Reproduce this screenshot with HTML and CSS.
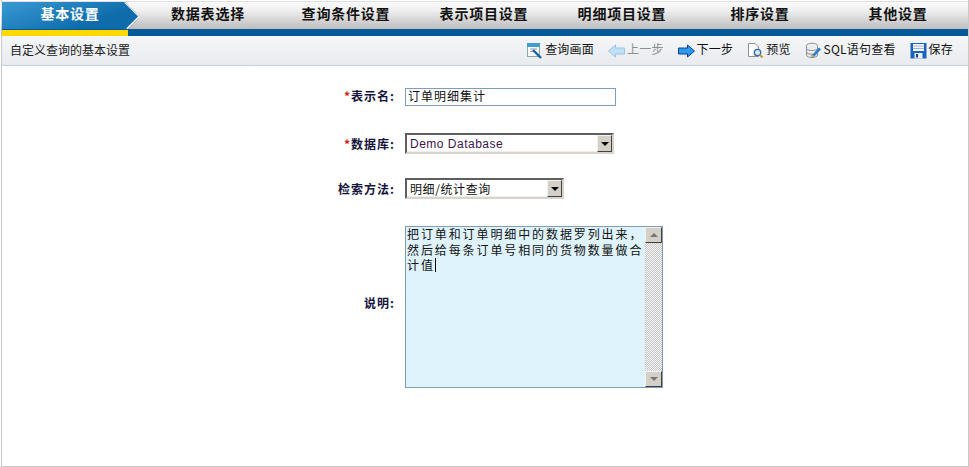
FILE: index.html
```html
<!DOCTYPE html>
<html lang="zh">
<head>
<meta charset="utf-8">
<title>自定义查询</title>
<link rel="stylesheet" href="styles.css">
</head>
<body>
<div class="frame">
  <nav class="tabs">
    <div class="tab active">基本设置
      <svg class="arrow" width="18" height="27" viewBox="0 0 18 27"><path d="M3 0L17.500 14.500L5 27" fill="none" stroke="#f4f4f4" stroke-width="2"/></svg>
    </div>
    <div class="tab">数据表选择</div>
    <div class="tab">查询条件设置</div>
    <div class="tab">表示项目设置</div>
    <div class="tab">明细项目设置</div>
    <div class="tab">排序设置</div>
    <div class="tab">其他设置</div>
  </nav>
  <div class="strip"><div class="strip-on"></div></div>
  <div class="toolbar">
    <span class="hint">自定义查询的基本设置</span>
    <div class="actions">
      <span class="act">
        <svg width="17" height="17" viewBox="0 0 17 17"><rect x="1.500" y="1.500" width="12" height="13" fill="#fff" stroke="#8aa"/><rect x="1" y="1" width="13" height="4" fill="#3f9fd0"/><path d="M4 7H11M4 9.500H9" stroke="#99a"/><path d="M7 8L15 16" stroke="#1c5fa8" stroke-width="2.400"/></svg>
        <span class="txt">查询画面</span></span>
      <span class="act off">
        <svg width="17" height="14" viewBox="0 0 17 14"><path d="M0.500 7L7.500 1V4H16.500V10H7.500V13Z" fill="#bfe0f6" stroke="#9cc3e0"/></svg>
        <span class="txt">上一步</span></span>
      <span class="act">
        <svg width="17" height="14" viewBox="0 0 17 14"><path d="M16.500 7L9.500 1V4H0.500V10H9.500V13Z" fill="#2f9ae8" stroke="#0b3f9c"/></svg>
        <span class="txt">下一步</span></span>
      <span class="act">
        <svg width="17" height="17" viewBox="0 0 17 17"><path d="M1.500 1.500H8L11.500 5V14.500H1.500Z" fill="#fff" stroke="#8b8f99"/><circle cx="10.500" cy="10.500" r="3.200" fill="#cfe8f8" stroke="#356a9a" stroke-width="1.300"/><path d="M13 13L15.500 15.500" stroke="#c8962a" stroke-width="2"/></svg>
        <span class="txt">预览</span></span>
      <span class="act">
        <svg width="17" height="17" viewBox="0 0 17 17"><ellipse cx="7" cy="3.500" rx="5.500" ry="2.200" fill="#f2f2f2" stroke="#8b8f99"/><path d="M1.500 3.500V13C1.500 14.500 4 15.500 7 15.500S12.500 14.500 12.500 13V3.500" fill="#ececec" stroke="#8b8f99"/><path d="M1.500 7C2.500 9 11 9 12.500 7M1.500 10.500C2.500 12.500 9 12.500 10 12" fill="none" stroke="#8b8f99"/><path d="M7 15L15 6.500" stroke="#2b7fd0" stroke-width="2.600"/><path d="M7 15L8.500 13.500" stroke="#e09a30" stroke-width="2.600"/></svg>
        <span class="txt">SQL语句查看</span></span>
      <span class="act">
        <svg width="17" height="17" viewBox="0 0 17 17"><path d="M0.500 1H16.500V16.500H0.500Z" fill="#1c62c0"/><rect x="3" y="2" width="11" height="7" fill="#f4f8fc"/><path d="M3 4H14M3 6.500H14" stroke="#9bb8d8"/><rect x="4.500" y="11" width="8" height="5.500" fill="#e8eef6"/><rect x="6" y="12" width="2" height="3.500" fill="#1c3f80"/></svg>
        <span class="txt">保存</span></span>
    </div>
  </div>
  <form class="form">
    <div class="row row-name">
      <label class="lbl lbl-name"><i class="req">*</i>表示名:</label>
      <div class="field-text">订单明细集计</div>
    </div>
    <div class="row row-db">
      <label class="lbl"><i class="req">*</i>数据库:</label>
      <div class="combo combo-db"><span class="combo-val purple">Demo Database</span><span class="btn"><b class="down"></b></span></div>
    </div>
    <div class="row row-way">
      <label class="lbl">检索方法:</label>
      <div class="combo combo-way"><span class="combo-val">明细/统计查询</span><span class="btn"><b class="down"></b></span></div>
    </div>
    <div class="row row-desc">
      <label class="lbl lbl-desc">说明:</label>
      <div class="memo">
        <div class="memo-text">把订单和订单明细中的数据罗列出来，然后给每条订单号相同的货物数量做合计值<span class="caret"></span></div>
        <div class="sbar">
          <span class="btn sbtn"><b class="up"></b></span>
          <span class="track"></span>
          <span class="btn sbtn"><b class="down grey"></b></span>
        </div>
      </div>
    </div>
  </form>
</div>
</body>
</html>
```
FILE: styles.css
```css
* { box-sizing: border-box; }
html, body { margin: 0; height: 100%; }
body {
  background: #fff;
  font-family: "Noto Sans CJK SC", "Liberation Sans", sans-serif;
  font-size: 12px;
  color: #111;
  overflow: hidden;
}
.frame {
  height: 467px;
  margin-left: 1px;
  padding-top: 2px;
  border-left: 1px solid #c8c8c8;
  border-right: 1px solid #c8c8c8;
  border-bottom: 1px solid #c8c8c8;
  background: #fff;
  display: flex;
  flex-direction: column;
  box-shadow: inset 0 1px 0 #fff, inset 0 2px 0 #e0e0e0;
}
.tabs {
  display: flex;
  height: 27px;
  margin-left: -1px;
  background: linear-gradient(#fafafa, #f0f0f0 30%, #bdbdbd);
}
.tab {
  flex: 0 0 138px;
  position: relative;
  text-align: center;
  font-weight: 700;
  font-size: 14px;
  line-height: 22px;
  letter-spacing: 0.8px;
  color: #111;
}
.tab.active {
  color: #fff;
  background: linear-gradient(160deg, #3a9ad4, #0f6cab 70%);
  clip-path: polygon(1px 0, 124px 0, 139px 15px, 127px 27px, 1px 27px);
}
.arrow { position: absolute; left: 121px; top: 0; }
.strip {
  height: 7px;
  background: #045a96;
}
.strip-on { width: 126px; height: 6px; margin-top: 1px; background: #ffd800; }
.toolbar {
  height: 30px;
  display: flex;
  align-items: center;
  justify-content: space-between;
  padding: 0 15px 0 8px;
  background: linear-gradient(#f5f6f8, #e8ebef);
  border-bottom: 1px solid #c6d0d8;
}
.hint { color: #222; margin-bottom: 2px; }
.actions { display: flex; gap: 14px; }
.act { display: flex; align-items: center; gap: 2px; color: #111; line-height: 17px; }
.txt { margin-bottom: 4px; letter-spacing: 0.2px; }
.act.off { color: #8f8f8f; }
.form { position: relative; flex: 1; padding-top: 21px; }
.row { display: grid; grid-template-columns: 393px auto; column-gap: 10px; align-items: center; justify-content: start; }
.row-name { height: 18px; margin-bottom: 28px; }
.row-db { height: 21px; margin-bottom: 24px; }
.row-way { height: 21px; margin-bottom: 27px; }
.row-desc { height: 162px; }
.lbl { text-align: right; font-weight: 700; color: #14143c; letter-spacing: 1px; }
.lbl-name { padding-bottom: 2px; }
.lbl-desc { padding-bottom: 10px; }
.req { color: #d01818; font-style: normal; font-weight: 700; }
.field-text {
  width: 211px; height: 18px;
  border: 1px solid #7f9db9;
  padding-left: 2px;
  line-height: 14px;
  letter-spacing: 1px;
}
.combo {
  display: flex;
  height: 21px;
  border: 2px solid;
  border-color: #5f5f5f #d8d4cc #d8d4cc #5f5f5f;
  background: #fff;
  box-shadow: inset -1px -1px 0 #eee;
}
.combo-db { width: 209px; }
.combo-way { width: 159px; }
.combo-val { flex: 1; padding-left: 3px; line-height: 17px; letter-spacing: 0.6px; }
.purple { color: #3a1550; letter-spacing: 0.5px; line-height: 19px; font-family: "Liberation Sans", sans-serif; }
.btn {
  flex: none;
  width: 15px;
  display: flex;
  align-items: center;
  justify-content: center;
  background: #d4d0c8;
  border: 1px solid;
  border-color: #f4f2ee #404040 #404040 #f4f2ee;
}
.down { width: 0; height: 0; border: 4px solid transparent; border-top: 4px solid #000; border-bottom: 0; }
.down.grey { border-top-color: #777; }
.up { width: 0; height: 0; border: 4px solid transparent; border-bottom: 4px solid #777; border-top: 0; }
.memo {
  width: 258px; height: 162px;
  border: 1px solid #7f9db9;
  background: #dff3fd;
  display: flex;
}
.memo-text {
  flex: 1;
  padding: 0 1px;
  margin-top: -1px;
  line-height: 15.5px;
  letter-spacing: 1.9px;
  font-size: 12px;
  color: #111;
}
.caret { display: inline-block; width: 1px; height: 14px; background: #000; vertical-align: -2px; }
.sbar { width: 17px; display: flex; flex-direction: column; }
.sbtn { width: 17px; height: 16px; }
.track { flex: 1; background: repeating-conic-gradient(#c4c4c4 0 25%, #f8f8f8 0 50%) 0 0 / 2px 2px; }
```
